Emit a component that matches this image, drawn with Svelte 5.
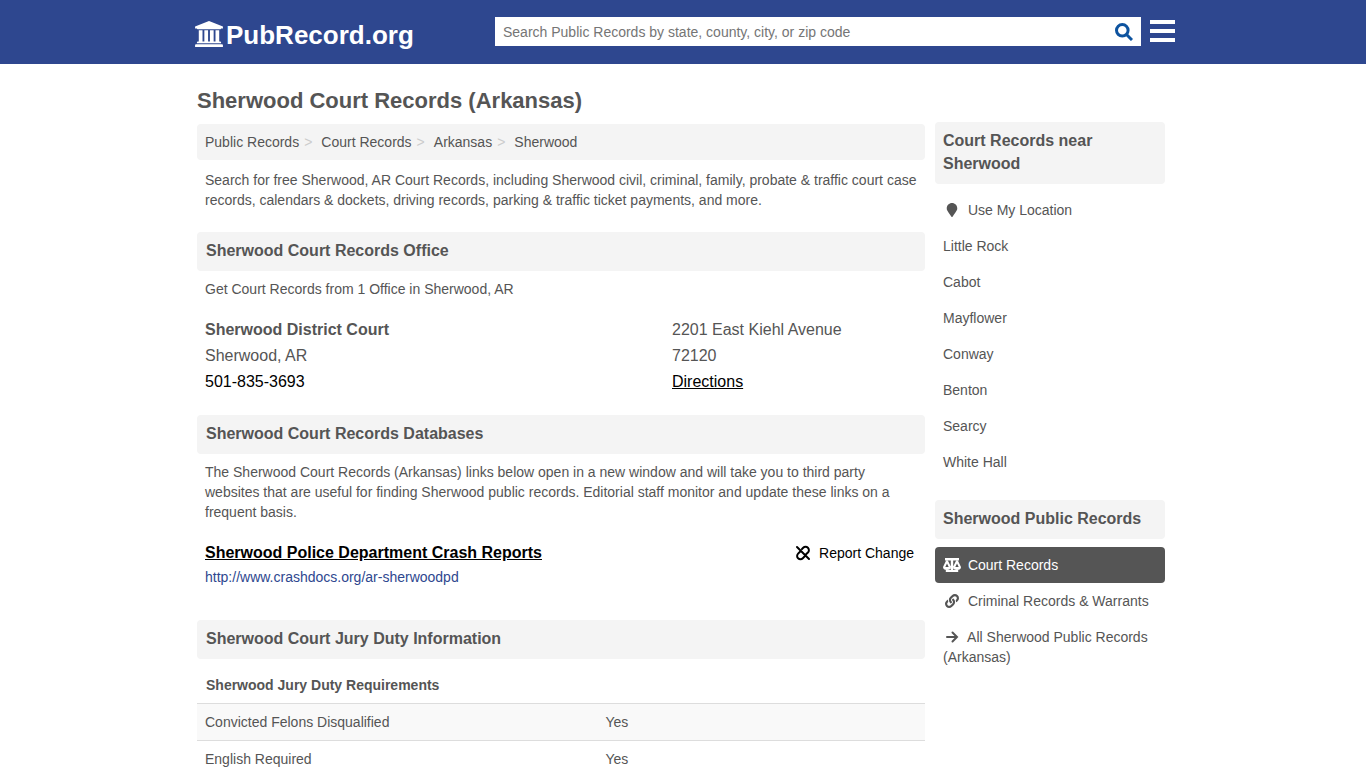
<script>
    let search = '';

    const crumbs = ['Public Records', 'Court Records', 'Arkansas', 'Sherwood'];
    const cities = ['Little Rock', 'Cabot', 'Mayflower', 'Conway', 'Benton', 'Searcy', 'White Hall'];
    const requirements = [
        { name: 'Convicted Felons Disqualified', value: 'Yes' },
        { name: 'English Required', value: 'Yes' }
    ];
</script>

<header>
    <div class="wrap bar">
        <a class="logo" href="/">
            <svg viewBox="0 0 1920 1792" width="28" height="26" aria-hidden="true"><path d="M960 0l960 384v128h-128q0 26-20.500 45t-48.500 19h-1526q-28 0-48.500-19t-20.500-45h-128v-128zM256 640h256v768h128v-768h256v768h128v-768h256v768h128v-768h256v768h59q28 0 48.500 19t20.500 45v64h-1664v-64q0-26 20.500-45t48.500-19h59v-768zm1595 960q28 0 48.500 19t20.500 45v128h-1920v-128q0-26 20.500-45t48.500-19h1782z"/></svg>
            <span>PubRecord.org</span>
        </a>
        <form class="search" on:submit|preventDefault>
            <input type="text" aria-label="Search Public Records" placeholder="Search Public Records by state, county, city, or zip code" bind:value={search}>
            <button class="search__btn" aria-label="Search">
                <svg viewBox="0 0 18 18" width="18" height="18" aria-hidden="true"><circle cx="7.300" cy="7.300" r="5.800"/><path d="M11.500 11.500L17 17"/></svg>
            </button>
        </form>
        <button class="menu" aria-label="Menu">
            <svg viewBox="0 0 25 22" width="25" height="22" aria-hidden="true"><path d="M0 0h25v4H0zM0 9h25v4H0zM0 18h25v4H0z"/></svg>
        </button>
    </div>
</header>

<div class="wrap page">
    <main>
        <h1>Sherwood Court Records (Arkansas)</h1>
        <nav aria-label="Breadcrumb">
            <ol class="crumbs">
                {#each crumbs as crumb}
                    <li><a href="/">{crumb}</a></li>
                {/each}
            </ol>
        </nav>
        <p class="intro">Search for free Sherwood, AR Court Records, including Sherwood civil, criminal, family, probate &amp; traffic court case records, calendars &amp; dockets, driving records, parking &amp; traffic ticket payments, and more.</p>

        <h2>Sherwood Court Records Office</h2>
        <p>Get Court Records from 1 Office in Sherwood, AR</p>
        <div class="office">
            <div class="office__name">
                <strong>Sherwood District Court</strong>
                <div>Sherwood, AR</div>
                <a href="tel:501-835-3693">501-835-3693</a>
            </div>
            <div class="office__address">
                <div>2201 East Kiehl Avenue</div>
                <div>72120</div>
                <a class="underline" href="/">Directions</a>
            </div>
        </div>

        <h2>Sherwood Court Records Databases</h2>
        <p>The Sherwood Court Records (Arkansas) links below open in a new window and will take you to third party websites that are useful for finding Sherwood public records. Editorial staff monitor and update these links on a frequent basis.</p>
        <div class="database">
            <div>
                <a class="database__title" href="http://www.crashdocs.org/ar-sherwoodpd">Sherwood Police Department Crash Reports</a>
                <div class="database__url">http://www.crashdocs.org/ar-sherwoodpd</div>
            </div>
            <a class="report" href="/">
                <svg class="line" viewBox="0 0 16 16" width="16" height="16" aria-hidden="true"><path d="M2 2l12 12M7 4l1.200-1.200a3.300 3.300 0 0 1 4.700 0 3.300 3.300 0 0 1 0 4.700L10.800 9.500M5 6.700L3.100 8.600a3.300 3.300 0 0 0 0 4.700 3.300 3.300 0 0 0 4.700 0L9.500 11.500"/></svg>
                Report Change
            </a>
        </div>

        <h2>Sherwood Court Jury Duty Information</h2>
        <table>
            <thead>
                <tr><th colspan="2">Sherwood Jury Duty Requirements</th></tr>
            </thead>
            <tbody>
                {#each requirements as row}
                    <tr><td>{row.name}</td><td>{row.value}</td></tr>
                {/each}
            </tbody>
        </table>
    </main>

    <aside>
        <h3>Court Records near Sherwood</h3>
        <ul>
            <li>
                <a href="/">
                    <svg viewBox="0 0 384 512" width="18" height="14" aria-hidden="true"><path d="M172.268 501.670C26.970 291.031 0 269.413 0 192 0 85.961 85.961 0 192 0s192 85.961 192 192c0 77.413-26.970 99.031-172.268 309.670-9.535 13.774-29.930 13.773-39.464 0z"/></svg>
                    Use My Location
                </a>
            </li>
            {#each cities as city}
                <li><a href="/">{city}</a></li>
            {/each}
        </ul>
        <h3>Sherwood Public Records</h3>
        <ul>
            <li>
                <a class="active" href="/">
                    <svg viewBox="0 0 18 14" width="18" height="14" aria-hidden="true"><path fill-rule="evenodd" d="M2 0h5.500h3H16v2.400h-5.800V12h5v2H2.800v-2h5V2.400H2zM4 2.500q.8 0 1.100.6L8 9q0 3-4 3T0 9l2.900-5.900q.3-.6 1.100-.6zM4 5.500L2.300 9h3.400zM14 2.500q.8 0 1.100.6L18 9q0 3-4 3t-4-3l2.900-5.900q.3-.6 1.100-.6zM14 5.500L12.300 9h3.400z"/></svg>
                    Court Records
                </a>
            </li>
            <li>
                <a href="/">
                    <svg viewBox="0 0 512 512" width="18" height="14" aria-hidden="true"><path d="M326.612 185.391c59.747 59.809 58.927 155.698.36 214.590-.11.12-.24.25-.36.37l-67.200 67.200c-59.270 59.270-155.699 59.262-214.960 0-59.270-59.260-59.270-155.700 0-214.960l37.106-37.106c9.840-9.840 26.786-3.300 27.294 10.606.648 17.722 3.826 35.527 9.690 52.721 1.986 5.822.567 12.262-3.783 16.612l-13.087 13.087c-28.026 28.026-28.905 73.660-1.155 101.960 28.024 28.579 74.086 28.749 102.325.51l67.200-67.190c28.191-28.191 28.073-73.757 0-101.830-3.701-3.694-7.429-6.564-10.341-8.569a16.037 16.037 0 0 1-6.947-12.606c-.396-10.567 3.348-21.456 11.698-29.806l21.054-21.055c5.521-5.521 14.182-6.199 20.584-1.731a152.482 152.482 0 0 1 20.522 17.197zM467.547 44.449c-59.261-59.262-155.690-59.270-214.960 0l-67.200 67.200c-.12.12-.25.25-.36.37-58.566 58.892-59.387 154.781.36 214.590a152.454 152.454 0 0 0 20.521 17.196c6.402 4.468 15.064 3.789 20.584-1.731l21.054-21.055c8.350-8.350 12.094-19.239 11.698-29.806a16.037 16.037 0 0 0-6.947-12.606c-2.912-2.005-6.640-4.875-10.341-8.569-28.073-28.073-28.191-73.639 0-101.830l67.200-67.190c28.239-28.239 74.300-28.069 102.325.51 27.750 28.300 26.872 73.934-1.155 101.960l-13.087 13.087c-4.350 4.350-5.769 10.790-3.783 16.612 5.864 17.194 9.042 34.999 9.690 52.721.509 13.906 17.454 20.446 27.294 10.606l37.106-37.106c59.271-59.259 59.271-155.699.001-214.959z"/></svg>
                    Criminal Records &amp; Warrants
                </a>
            </li>
            <li>
                <a href="/">
                    <svg class="line" viewBox="0 0 18 14" width="18" height="14" aria-hidden="true"><path d="M4 7h10M9.500 2.500L14 7l-4.500 4.500"/></svg>
                    All Sherwood Public Records (Arkansas)
                </a>
            </li>
        </ul>
    </aside>
</div>

<style>
    :global(body){
        background: #fff;
        color: #555;
        font-family: "Liberation Sans", Arial, sans-serif;
        font-size: 14px;
        line-height: 20px;
    }
    h1, h2, h3, p, ul, ol{
        margin: 0;
        padding: 0;
    }
    ul, ol{
        list-style: none;
    }
    a{
        color: inherit;
        text-decoration: none;
    }
    svg{
        fill: currentColor;
    }
    .line{
        fill: none;
        stroke: currentColor;
        stroke-width: 2px;
        stroke-linecap: round;
    }
    header{
        background: #2e478f;
        color: #fff;
    }
    .wrap{
        max-width: 980px;
        margin: 0 auto;
        box-sizing: border-box;
    }
    .bar{
        display: flex;
        align-items: flex-start;
        max-width: 984px;
        height: 64px;
        padding-left: 4px;
    }
    .logo{
        display: flex;
        align-items: center;
        gap: 3px;
        flex: 0 0 300px;
        padding-top: 20px;
        font-size: 26px;
        line-height: 30px;
        font-weight: bold;
    }
    .logo svg{
        margin-bottom: 2px;
    }
    .search{
        display: flex;
        flex: 1;
        margin-top: 17px;
        background: #fff;
    }
    .search input{
        flex: 1;
        min-width: 0;
        height: 29px;
        box-sizing: border-box;
        border: 0;
        padding: 0 8px;
        background: none;
        font: inherit;
        color: #555;
    }
    .search input::placeholder{
        color: #757575;
    }
    button{
        display: flex;
        align-items: center;
        border: 0;
        padding: 0;
        background: none;
        color: inherit;
        cursor: pointer;
    }
    .search__btn{
        padding: 0 8px;
        color: #0d539f;
    }
    .search__btn svg{
        fill: none;
        stroke: currentColor;
        stroke-width: 3px;
    }
    .menu{
        margin: 20px 0 0 9px;
    }
    .page{
        display: flex;
        align-items: flex-start;
        gap: 10px;
        padding: 0 8px 0 4px;
    }
    main{
        flex: 1;
        min-width: 0;
        padding-top: 25px;
    }
    aside{
        flex: 0 0 230px;
        padding-top: 58px;
    }
    h1{
        margin-bottom: 11px;
        font-size: 22px;
        line-height: 24px;
    }
    h2, h3{
        padding: 7px 8px 9px;
        border-radius: 4px;
        background: #f4f4f4;
        font-size: 16px;
        line-height: 23px;
    }
    h2{
        padding-left: 9px;
    }
    main p{
        padding: 8px;
    }
    .crumbs{
        display: flex;
        padding: 8px;
        border-radius: 4px;
        background: #f4f4f4;
    }
    .crumbs li + li::before{
        content: ">";
        padding: 0 9px 0 5px;
        color: #ccc;
    }
    main .intro{
        padding-top: 10px;
    }
    .intro + h2{
        margin-top: 14px;
    }
    .office{
        display: flex;
        padding: 8px;
        margin: 2px 0 12px;
        font-size: 16px;
        line-height: 26px;
    }
    .office a{
        color: #000;
    }
    .office__name{
        flex: 0 0 467px;
    }
    .underline{
        text-decoration: underline;
    }
    .database{
        display: flex;
        justify-content: space-between;
        padding: 8px;
        margin: 2px 0 24px;
        line-height: 26px;
    }
    .database__title{
        display: block;
        color: #000;
        font-size: 16px;
        font-weight: bold;
        text-decoration: underline;
    }
    .database__url{
        line-height: 22px;
        color: #2e478f;
    }
    .report{
        display: flex;
        align-items: center;
        align-self: flex-start;
        gap: 8px;
        padding-right: 3px;
        color: #000;
    }
    table{
        width: 100%;
        margin-top: 8px;
        border-collapse: collapse;
    }
    th, td{
        padding: 8px;
        text-align: left;
    }
    th{
        padding-left: 9px;
    }
    td{
        width: 45%;
        border-top: 1px solid #ddd;
    }
    td:first-child{
        width: 55%;
    }
    tbody tr:nth-child(odd){
        background: #f9f9f9;
    }
    aside ul{
        margin: 8px 0 20px;
    }
    aside li a{
        display: block;
        padding: 8px;
        border-radius: 4px;
    }
    aside li svg{
        margin: 0 3px 2px 0;
        vertical-align: middle;
    }
    .active{
        background: #555;
        color: #fff;
    }
</style>
